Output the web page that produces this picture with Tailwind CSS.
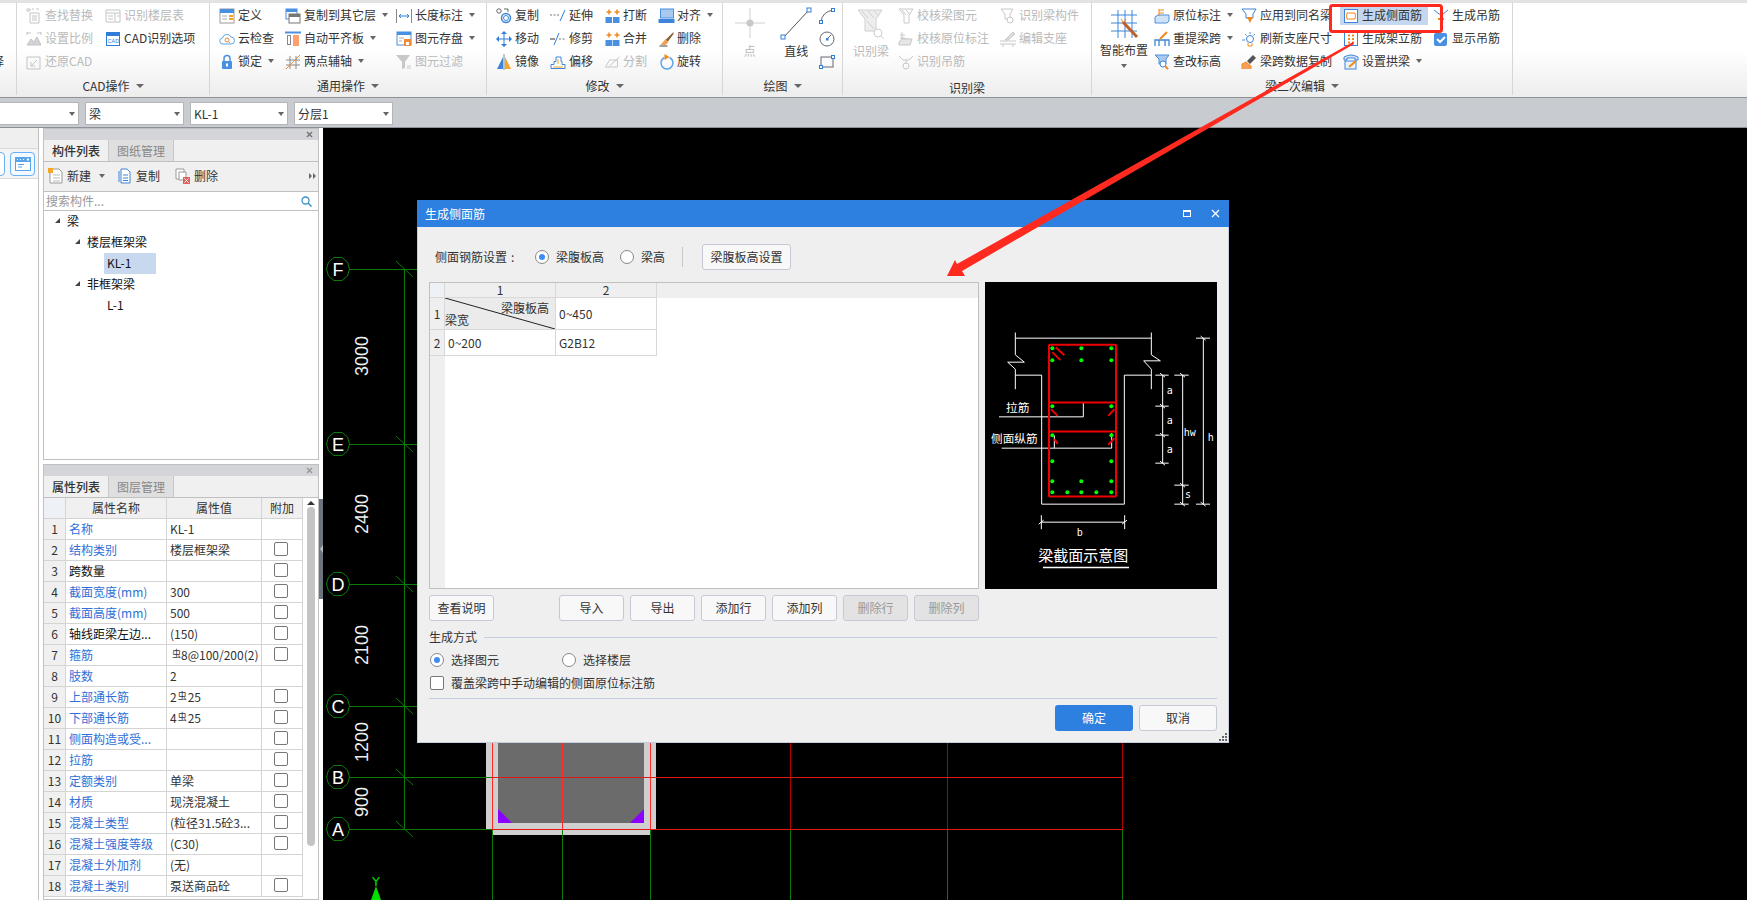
<!DOCTYPE html>
<html lang="zh-CN">
<head>
<meta charset="UTF-8">
<title>生成侧面筋</title>
<script src="https://cdn.jsdelivr.net/npm/@tailwindcss/browser@4"></script>
</head>
<body class="relative w-[1747px] h-[900px] overflow-hidden bg-white text-[12px] leading-[18px] text-[#333] font-['Noto_Sans_CJK_SC',sans-serif]">

<!-- Ribbon -->
<header class="flex h-[98px] border-t-[3px] border-b border-t-[#e2e2e2] border-b-[#8e9296] bg-gradient-to-b from-white from-50% to-[#ededed]">
  <div class="w-[17px] h-[92px] border-r border-[#d6d6d6] overflow-hidden">
    <div class="h-[46px]"></div>
    <div class="h-[23px] flex items-center -ml-[8px] whitespace-nowrap">择</div>
  </div>

  <!-- CAD操作 -->
  <section class="w-[193px] h-[92px] border-r border-[#d6d6d6] flex flex-col [&_svg]:translate-y-[1px]">
    <div class="flex h-[69px] pl-[9px] text-[#b9b9b9]">
      <div class="w-[79px]">
        <div class="h-[23px] flex items-center"><svg class="w-4 h-4 mr-[3px]" viewBox="0 0 16 16" fill="none" stroke="#c4c4c4"><path d="M4 5h9v10H4zM6 8h5M6 10h5M6 12h5M1 1h3v2H1zM6 1h2M10 1h3"/></svg>查找替换</div>
        <div class="h-[23px] flex items-center"><svg class="w-4 h-4 mr-[3px]" viewBox="0 0 16 16" fill="none" stroke="#c4c4c4"><path d="M1 1v3M1 2h4M11 2h4M15 1v3"/><path d="M1 14l4-6 3 3 3-5 4 8z" fill="#d4d4d4"/></svg>设置比例</div>
        <div class="h-[23px] flex items-center"><svg class="w-4 h-4 mr-[3px]" viewBox="0 0 16 16" fill="none" stroke="#c4c4c4"><path d="M1 3h13v12H1zM11 6l-6 6M5 8v4h4"/></svg>还原CAD</div>
      </div>
      <div>
        <div class="h-[23px] flex items-center"><svg class="w-4 h-4 mr-[3px]" viewBox="0 0 16 16" fill="none" stroke="#c4c4c4"><path d="M1 2h14v12H1zM1 5h14M10 5v9M3 8h5M3 11h5M12 8h2"/></svg>识别楼层表</div>
        <div class="h-[23px] flex items-center text-[#333]"><svg class="w-4 h-4 mr-[3px]" viewBox="0 0 16 16"><rect x="1" y="1" width="14" height="4" fill="#2f7fd8"/><rect x="1.500" y="1.500" width="13" height="13" fill="none" stroke="#2f7fd8"/><text x="2.500" y="12" font-size="5.500" fill="#2f7fd8" font-family="Liberation Sans">CAD</text></svg>CAD识别选项</div>
      </div>
    </div>
    <div class="flex-1 flex items-center justify-center pt-[5px]">CAD操作<span class="ml-[6px] border-x-[4px] border-t-[4px] border-x-transparent border-t-[#666]"></span></div>
  </section>

  <!-- 通用操作 -->
  <section class="w-[277px] h-[92px] border-r border-[#d6d6d6] flex flex-col [&_svg]:translate-y-[1px]">
    <div class="flex h-[69px] pl-[9px]">
      <div class="w-[66px]">
        <div class="h-[23px] flex items-center"><svg class="w-4 h-4 mr-[3px]" viewBox="0 0 16 16"><rect x="1" y="1" width="14" height="14" fill="#fff" stroke="#9a9a9a"/><rect x="1" y="1" width="14" height="4" fill="#4a90e2"/><path d="M3 8h5M3 11h5" stroke="#aaa"/><path d="M10 8h4M10 11h4" stroke="#f5a623" stroke-width="2"/></svg>定义</div>
        <div class="h-[23px] flex items-center"><svg class="w-4 h-4 mr-[3px]" viewBox="0 0 16 16"><path d="M4 13a3 3 0 0 1-.5-6A4.500 4.500 0 0 1 12 6a3.500 3.500 0 0 1 0 7z" fill="#fff" stroke="#5aa5ea"/><circle cx="8" cy="9" r="2" fill="none" stroke="#f08a3c"/><path d="M9.500 10.500l1.500 1.500" stroke="#f08a3c"/></svg>云检查</div>
        <div class="h-[23px] flex items-center"><svg class="w-4 h-4 mr-[3px]" viewBox="0 0 16 16"><path d="M5 7V4.500a3 3 0 0 1 6 0V7" fill="none" stroke="#4a90e2" stroke-width="1.500"/><rect x="3" y="7" width="10" height="8" rx="1" fill="#4a90e2"/><rect x="7" y="9.500" width="2" height="3" fill="#fff"/></svg>锁定<span class="ml-[6px] border-x-[3px] border-t-[4px] border-x-transparent border-t-[#666]"></span></div>
      </div>
      <div class="w-[111px]">
        <div class="h-[23px] flex items-center"><svg class="w-4 h-4 mr-[3px]" viewBox="0 0 16 16"><rect x="1" y="1" width="11" height="10" fill="#fff" stroke="#4a90e2"/><rect x="1" y="1" width="11" height="3" fill="#4a90e2"/><rect x="4" y="6" width="11" height="9" fill="#fff" stroke="#777"/><rect x="4" y="6" width="11" height="3" fill="#777"/></svg>复制到其它层<span class="ml-[6px] border-x-[3px] border-t-[4px] border-x-transparent border-t-[#666]"></span></div>
        <div class="h-[23px] flex items-center"><svg class="w-4 h-4 mr-[3px]" viewBox="0 0 16 16"><path d="M0 1.500h16" stroke="#4a90e2" stroke-width="2"/><rect x="2.500" y="4.500" width="3" height="9" fill="#fff" stroke="#888"/><rect x="8" y="4" width="6" height="11" fill="#ff9f70"/></svg>自动平齐板<span class="ml-[6px] border-x-[3px] border-t-[4px] border-x-transparent border-t-[#666]"></span></div>
        <div class="h-[23px] flex items-center"><svg class="w-4 h-4 mr-[3px]" viewBox="0 0 16 16" fill="none"><path d="M5 2v13M11 2v13M1 6h14M1 11h14" stroke="#8a8a8a"/><path d="M1 15L15 1" stroke="#f08a3c"/></svg>两点辅轴<span class="ml-[6px] border-x-[3px] border-t-[4px] border-x-transparent border-t-[#666]"></span></div>
      </div>
      <div>
        <div class="h-[23px] flex items-center"><svg class="w-4 h-4 mr-[3px]" viewBox="0 0 16 16" fill="none"><path d="M.500 1v14M15.500 1v14" stroke="#888"/><path d="M3 8h10M5 6L3 8l2 2M11 6l2 2-2 2" stroke="#2f7fd8"/></svg>长度标注<span class="ml-[6px] border-x-[3px] border-t-[4px] border-x-transparent border-t-[#666]"></span></div>
        <div class="h-[23px] flex items-center"><svg class="w-4 h-4 mr-[3px]" viewBox="0 0 16 16"><rect x="1" y="1" width="14" height="13" fill="#fff" stroke="#4a90e2"/><rect x="1" y="1" width="14" height="3" fill="#4a90e2"/><path d="M3 7h5M3 10h3" stroke="#aaa"/><rect x="8" y="8" width="7" height="7" fill="#f08a3c"/><rect x="10" y="11" width="3" height="3" fill="#fff"/></svg>图元存盘<span class="ml-[6px] border-x-[3px] border-t-[4px] border-x-transparent border-t-[#666]"></span></div>
        <div class="h-[23px] flex items-center text-[#b9b9b9]"><svg class="w-4 h-4 mr-[3px]" viewBox="0 0 16 16"><path d="M0 1h14L9 8v6l-3 1V8z" fill="#c8c8c8"/><path d="M11 12h4M11 14h4" stroke="#ccc"/></svg>图元过滤</div>
      </div>
    </div>
    <div class="flex-1 flex items-center justify-center pt-[5px]">通用操作<span class="ml-[6px] border-x-[4px] border-t-[4px] border-x-transparent border-t-[#666]"></span></div>
  </section>

  <!-- 修改 -->
  <section class="w-[236px] h-[92px] border-r border-[#d6d6d6] flex flex-col [&_svg]:translate-y-[1px]">
    <div class="flex h-[69px] pl-[9px]">
      <div class="w-[54px]">
        <div class="h-[23px] flex items-center"><svg class="w-4 h-4 mr-[3px]" viewBox="0 0 16 16" fill="none"><circle cx="3" cy="3" r="2.200" stroke="#666"/><circle cx="10" cy="10" r="4.500" stroke="#3d85d8" stroke-width="1.500"/><circle cx="10" cy="10" r="2.500" stroke="#3d85d8"/><path d="M8 1h4v3" stroke="#666"/></svg>复制</div>
        <div class="h-[23px] flex items-center"><svg class="w-4 h-4 mr-[3px]" viewBox="0 0 16 16" fill="#2f7fd8"><path d="M8 0l3 3H5zM8 16l-3-3h6zM0 8l3-3v6zM16 8l-3 3V5z"/><path d="M3 7.500h10v1H3zM7.500 3h1v10h-1z"/></svg>移动</div>
        <div class="h-[23px] flex items-center"><svg class="w-4 h-4 mr-[3px]" viewBox="0 0 16 16"><path d="M7 3L1 15h6z" fill="#3d85d8"/><path d="M8 0v16" stroke="#888"/><path d="M9 3l6 12H9z" fill="#f5a623"/></svg>镜像</div>
      </div>
      <div class="w-[54px]">
        <div class="h-[23px] flex items-center"><svg class="w-4 h-4 mr-[3px]" viewBox="0 0 16 16" fill="none"><path d="M0 7h9" stroke="#777" stroke-dasharray="2 1.500"/><path d="M10 13l5-11" stroke="#2f7fd8"/></svg>延伸</div>
        <div class="h-[23px] flex items-center"><svg class="w-4 h-4 mr-[3px]" viewBox="0 0 16 16" fill="none"><path d="M0 8h5" stroke="#333"/><path d="M9 8h7" stroke="#777" stroke-dasharray="2 1.500"/><path d="M4 14L9 2" stroke="#2f7fd8"/></svg>修剪</div>
        <div class="h-[23px] flex items-center"><svg class="w-4 h-4 mr-[3px]" viewBox="0 0 16 16"><path d="M1 14.500h14v-4h-3v-3h-1V3H6v4.500H4v3H1z" fill="#fff" stroke="#3d85d8"/><path d="M3 13h10M8 5v5" stroke="#f5a623"/></svg>偏移</div>
      </div>
      <div class="w-[54px]">
        <div class="h-[23px] flex items-center"><svg class="w-[17px] h-4 mr-[2px]" viewBox="0 0 16 16" fill="none"><path d="M2 4h5M4.500 1.500v5M10 4h5M12.500 1.500v5" stroke="#f08a1c" stroke-width="1.500"/><rect x="1" y="9" width="6.500" height="6" fill="#4a90e2"/><rect x="8.500" y="9" width="6.500" height="6" fill="#4a90e2"/></svg>打断</div>
        <div class="h-[23px] flex items-center"><svg class="w-[17px] h-4 mr-[2px]" viewBox="0 0 16 16" fill="none"><path d="M2 4h5M4.500 1.500v5M10 4h5M12.500 1.500v5" stroke="#f08a1c" stroke-width="1.500"/><rect x="1" y="9" width="14" height="6" fill="#4a90e2"/><path d="M8 9v6" stroke="#bcd6f5"/></svg>合并</div>
        <div class="h-[23px] flex items-center text-[#b9b9b9]"><svg class="w-[17px] h-4 mr-[2px]" viewBox="0 0 16 16" fill="none" stroke="#c8c8c8"><path d="M1 13h12M1 13l4-7h8M13 6v7M4 13L15 3"/></svg>分割</div>
      </div>
      <div>
        <div class="h-[23px] flex items-center"><svg class="w-[17px] h-4 mr-[2px]" viewBox="0 0 16 16"><rect x="2" y="1" width="13" height="9" fill="#a8c8ee" stroke="#4a90e2"/><rect x="0" y="11" width="16" height="4" fill="#3d85d8"/></svg>对齐<span class="ml-[6px] border-x-[3px] border-t-[4px] border-x-transparent border-t-[#666]"></span></div>
        <div class="h-[23px] flex items-center"><svg class="w-[17px] h-4 mr-[2px]" viewBox="0 0 16 16"><path d="M1 15h8" stroke="#444"/><path d="M15 1L7 9l2 2 6-8z" fill="#8a5a2b"/><path d="M7 8l3 3-3 3H2z" fill="#f0a050"/></svg>删除</div>
        <div class="h-[23px] flex items-center"><svg class="w-[17px] h-4 mr-[2px]" viewBox="0 0 16 16" fill="none"><path d="M6 3.500a6 6 0 1 0 5 0" stroke="#5aa5ea" stroke-width="1.500"/><path d="M6 0l5 3-5 3z" fill="#f08a1c"/></svg>旋转</div>
      </div>
    </div>
    <div class="flex-1 flex items-center justify-center pt-[5px]">修改<span class="ml-[6px] border-x-[4px] border-t-[4px] border-x-transparent border-t-[#666]"></span></div>
  </section>

  <!-- 绘图 -->
  <section class="w-[120px] h-[92px] border-r border-[#d6d6d6] flex flex-col [&_svg]:translate-y-[1px]">
    <div class="flex h-[69px]">
      <div class="w-[54px] flex flex-col items-center text-[#b9b9b9]">
        <svg class="w-[36px] h-[36px] mt-[1px]" viewBox="0 0 36 36" fill="none"><path d="M3 18h30M18 3v30" stroke="#d0d0d0"/><circle cx="18" cy="18" r="3.500" fill="#c8c8c8"/></svg>
        <span class="mt-[2px]">点</span>
      </div>
      <div class="w-[40px] flex flex-col items-center">
        <svg class="w-[32px] h-[36px] mt-[1px]" viewBox="0 0 32 36" fill="none"><path d="M3 33L29 5" stroke="#555"/><rect x="1" y="30" width="4" height="4" fill="#fff" stroke="#2f7fd8"/><rect x="27" y="3" width="4" height="4" fill="#fff" stroke="#2f7fd8"/></svg>
        <span class="mt-[2px]">直线</span>
      </div>
      <div class="w-[26px] pl-[3px]">
        <div class="h-[23px] flex items-center"><svg class="w-4 h-4" viewBox="0 0 16 16" fill="none"><path d="M2 14Q3 4 14 2" stroke="#666"/><rect x="0.500" y="12.500" width="3" height="3" fill="#fff" stroke="#2f7fd8"/><rect x="12.500" y="0.500" width="3" height="3" fill="#fff" stroke="#2f7fd8"/></svg></div>
        <div class="h-[23px] flex items-center"><svg class="w-4 h-4" viewBox="0 0 16 16" fill="none"><circle cx="8" cy="8" r="7" stroke="#667"/><path d="M8 8l4-4" stroke="#667"/><rect x="7" y="7" width="2.500" height="2.500" fill="#2f7fd8"/></svg></div>
        <div class="h-[23px] flex items-center"><svg class="w-4 h-4" viewBox="0 0 16 16" fill="none"><rect x="2" y="3" width="12" height="10" stroke="#667"/><rect x="0.500" y="11.500" width="3" height="3" fill="#fff" stroke="#2f7fd8"/><rect x="12.500" y="1.500" width="3" height="3" fill="#fff" stroke="#2f7fd8"/></svg></div>
      </div>
    </div>
    <div class="flex-1 flex items-center justify-center pt-[5px]">绘图<span class="ml-[6px] border-x-[4px] border-t-[4px] border-x-transparent border-t-[#666]"></span></div>
  </section>

  <!-- 识别梁 -->
  <section class="w-[249px] h-[92px] border-r border-[#d6d6d6] flex flex-col [&_svg]:translate-y-[1px]">
    <div class="flex h-[69px] pl-[9px] text-[#b9b9b9]">
      <div class="w-[46px] flex flex-col items-center pr-[8px]">
        <svg class="w-[28px] h-[36px] mt-[1px]" viewBox="0 0 28 36" fill="none" stroke="#cfcfcf"><path d="M1 5h24L19 14v12H8V14z" fill="#eee"/><path d="M5 6l6 7M11 6l6 7M17 6l5 5M10 16l7 8"/><circle cx="21" cy="28" r="4" fill="#fff"/><path d="M24 31l3 3"/></svg>
        <span class="mt-[2px] whitespace-nowrap">识别梁</span>
      </div>
      <div class="w-[102px]">
        <div class="h-[23px] flex items-center"><svg class="w-4 h-4 mr-[3px]" viewBox="0 0 16 16" fill="none" stroke="#c8c8c8"><path d="M1 1h14l-4 6v8H6V7zM4 2l4 5M8 2l4 5"/></svg>校核梁图元</div>
        <div class="h-[23px] flex items-center"><svg class="w-4 h-4 mr-[3px]" viewBox="0 0 16 16" fill="none" stroke="#c8c8c8"><path d="M4 1v7h7M2 4h5M2 7h5"/><path d="M1 11l3-3h10l-2 6H1z" fill="#e6e6e6"/></svg>校核原位标注</div>
        <div class="h-[23px] flex items-center"><svg class="w-4 h-4 mr-[3px]" viewBox="0 0 16 16" fill="none" stroke="#c8c8c8"><path d="M1 2l4 4h6l4-4M8 6v4"/><circle cx="8" cy="12" r="3"/></svg>识别吊筋</div>
      </div>
      <div>
        <div class="h-[23px] flex items-center"><svg class="w-4 h-4 mr-[3px]" viewBox="0 0 16 16" fill="none" stroke="#c8c8c8"><path d="M1 1h12l-3 5v5H5V6z"/><circle cx="10" cy="12" r="3" fill="#fff"/></svg>识别梁构件</div>
        <div class="h-[23px] flex items-center"><svg class="w-4 h-4 mr-[3px]" viewBox="0 0 16 16" fill="none" stroke="#c8c8c8"><path d="M0 10h16M0 13h16M3 13v3M13 13v3"/><path d="M5 9l8-8 2 2-7 6z" fill="#ddd"/></svg>编辑支座</div>
      </div>
    </div>
    <div class="flex-1 flex items-center justify-center pt-[7px]">识别梁</div>
  </section>

  <!-- 梁二次编辑 -->
  <section class="w-[421px] h-[92px] border-r border-[#d6d6d6] flex flex-col [&_svg]:translate-y-[1px]">
    <div class="flex h-[69px] pl-[8px]">
      <div class="w-[54px] flex flex-col items-center pr-[6px]">
        <svg class="w-[30px] h-[32px] mt-[5px]" viewBox="0 0 30 32" fill="none"><path d="M2 6h26M2 14h26M2 22h26M9 1v28M16 1v28M23 1v28" stroke="#3d85d8"/><path d="M14 13l14 15" stroke="#c0602a" stroke-width="3"/><path d="M12 10l2 3M17 10l-2 3" stroke="#f08a1c"/></svg>
        <span class="whitespace-nowrap mt-[1px]">智能布置</span>
        <span class="mt-[5px] border-x-[3px] border-t-[4px] border-x-transparent border-t-[#666]"></span>
      </div>
      <div class="w-[87px]">
        <div class="h-[23px] flex items-center"><svg class="w-4 h-4 mr-[3px]" viewBox="0 0 16 16"><path d="M1 15V9l3-2h11v6l-2 2z" fill="#cfe2f7" stroke="#4a90e2"/><path d="M5 1v7M5 2h5M5 5h5" stroke="#f08a1c"/></svg>原位标注<span class="ml-[6px] border-x-[3px] border-t-[4px] border-x-transparent border-t-[#666]"></span></div>
        <div class="h-[23px] flex items-center"><svg class="w-4 h-4 mr-[3px]" viewBox="0 0 16 16" fill="none"><path d="M1 15V9h14v6M5 15V9M11 15V9" stroke="#3d85d8" stroke-width="1.300"/><path d="M6 8l7-7" stroke="#f08a1c" stroke-width="2"/></svg>重提梁跨<span class="ml-[6px] border-x-[3px] border-t-[4px] border-x-transparent border-t-[#666]"></span></div>
        <div class="h-[23px] flex items-center"><svg class="w-4 h-4 mr-[3px]" viewBox="0 0 16 16"><path d="M1 1h14l-3 4v5H5V5z" fill="#a8c8ee" stroke="#4a90e2"/><circle cx="9" cy="10" r="3" fill="#fff" stroke="#3d85d8"/><path d="M11 12l3 3" stroke="#f08a1c" stroke-width="2"/></svg>查改标高</div>
      </div>
      <div class="w-[102px]">
        <div class="h-[23px] flex items-center"><svg class="w-4 h-4 mr-[3px]" viewBox="0 0 16 16"><path d="M1 1h14l-3 5v4H5V6z" fill="#fff" stroke="#3d85d8"/><path d="M6 9h6l-3 6z" fill="#f08a1c"/></svg>应用到同名梁</div>
        <div class="h-[23px] flex items-center"><svg class="w-4 h-4 mr-[3px]" viewBox="0 0 16 16" fill="none"><circle cx="9" cy="8" r="3.500" stroke="#3d85d8"/><path d="M9 1v2M4 3l1.500 1.500M14 3l-1.500 1.500M1 9h3" stroke="#4a90e2"/><path d="M7 12v3h4v-3" stroke="#f08a1c"/></svg>刷新支座尺寸</div>
        <div class="h-[23px] flex items-center"><svg class="w-4 h-4 mr-[3px]" viewBox="0 0 16 16"><path d="M1 15v-5l4-2 5 4v3" fill="#f5a05a" stroke="#f08a1c"/><path d="M12 1l3 3-6 6-3-3z" fill="#555"/></svg>梁跨数据复制</div>
      </div>
      <div class="w-[90px]">
        <div class="relative isolate h-[23px] flex items-center"><span class="absolute -z-10 -left-[3px] top-[4px] w-[88px] h-[18px] bg-[#c5d7ee]"></span><svg class="w-4 h-4 mr-[3px]" viewBox="0 0 16 16" fill="none"><rect x="1.500" y="1.500" width="13" height="13" fill="#fff" stroke="#3d85d8"/><path d="M4 5h8M4 11h8M4 5Q3 8 4 11M12 5q1 3 0 6" stroke="#f08a1c"/></svg>生成侧面筋</div>
        <div class="h-[23px] flex items-center"><svg class="w-4 h-4 mr-[3px]" viewBox="0 0 16 16" fill="none"><rect x="1.500" y="1.500" width="13" height="13" fill="#fff" stroke="#3d85d8"/><path d="M5 4.500h2M9 4.500h2M5 8h2M9 8h2M5 11.500h2M9 11.500h2" stroke="#f08a1c" stroke-width="2"/></svg>生成架立筋</div>
        <div class="h-[23px] flex items-center"><svg class="w-4 h-4 mr-[3px]" viewBox="0 0 16 16"><path d="M1 3q7-4 14 0v3h-3V4H4v2H1z" fill="#cfe2f7" stroke="#3d85d8"/><rect x="2" y="7" width="11" height="8" fill="#eaf2fb" stroke="#3d85d8"/><path d="M6 13l7-6" stroke="#f08a1c" stroke-width="2"/></svg>设置拱梁<span class="ml-[6px] border-x-[3px] border-t-[4px] border-x-transparent border-t-[#666]"></span></div>
      </div>
      <div>
        <div class="h-[23px] flex items-center"><svg class="w-4 h-4 mr-[3px]" viewBox="0 0 16 16" fill="none"><path d="M1 2l5 4h4l5-4" stroke="#3d85d8"/><path d="M8 6v4M5 11h6" stroke="#f08a1c" stroke-width="2"/></svg>生成吊筋</div>
        <div class="h-[23px] flex items-center"><svg class="w-4 h-4 mr-[3px]" viewBox="0 0 16 16" fill="none"><rect x="1" y="2" width="13" height="13" rx="2" fill="#4a90e2"/><path d="M4 8l3 3 5-5" stroke="#fff" stroke-width="2"/></svg>显示吊筋</div>
      </div>
    </div>
    <div class="flex-1 flex items-center justify-center pt-[5px]">梁二次编辑<span class="ml-[6px] border-x-[4px] border-t-[4px] border-x-transparent border-t-[#666]"></span></div>
  </section>
</header>

<!-- Combo toolbar -->
<div class="flex h-[30px] pt-[4px] gap-[6px] bg-[#c8cbcf] border-b border-[#8e9296]">
  <div class="w-[79px] h-[23px] bg-white border border-[#b5b5b5] border-l-0 flex items-center justify-end pr-[3px]"><span class="border-x-[3px] border-t-[4px] border-x-transparent border-t-[#666]"></span></div>
  <div class="w-[99px] h-[23px] bg-white border border-[#b5b5b5] flex items-center justify-between pl-[3px] pr-[3px]">梁<span class="border-x-[3px] border-t-[4px] border-x-transparent border-t-[#666]"></span></div>
  <div class="w-[98px] h-[23px] bg-white border border-[#b5b5b5] flex items-center justify-between pl-[3px] pr-[3px]">KL-1<span class="border-x-[3px] border-t-[4px] border-x-transparent border-t-[#666]"></span></div>
  <div class="w-[99px] h-[23px] bg-white border border-[#b5b5b5] flex items-center justify-between pl-[3px] pr-[3px]">分层1<span class="border-x-[3px] border-t-[4px] border-x-transparent border-t-[#666]"></span></div>
</div>

<main class="flex h-[772px] overflow-hidden">
  <!-- Left strip -->
  <div class="w-[39px] shrink-0 border-r border-[#c0c0c0] flex flex-col">
    <div class="h-[21px] bg-[#efefef] border-b border-[#d8d8d8]"></div>
    <div class="h-[30px] bg-[#f5f5f5] border-b border-[#d8d8d8] flex items-center">
      <div class="w-[6px] h-[24px] -ml-[1px] border border-[#6ab0f5] rounded-r-[4px] bg-white"></div>
      <div class="ml-[5px] w-[25px] h-[24px] border border-[#6ab0f5] rounded-[4px] bg-[#f4f9ff] flex items-center justify-center">
        <svg class="w-[16px] h-[14px]" viewBox="0 0 16 14"><rect width="16" height="14" fill="#5aa5ea"/><rect x="1" y="5" width="14" height="8" fill="#fff"/><path d="M2 2.500h1M5 2.500h1M8 2.500h1M12 2h2l-1 1.500z" stroke="#fff" fill="#fff"/><path d="M3 7.500h6M3 10h4" stroke="#5aa5ea"/></svg>
      </div>
    </div>
    <div class="flex-1 bg-white"></div>
  </div>

  <!-- Panels -->
  <div class="w-[280px] shrink-0 pl-[4px] flex flex-col gap-[4px]">
    <section class="h-[332px] shrink-0 border border-[#c0c0c0] flex flex-col bg-white">
      <div class="h-[11px] bg-[#d3d5d8] flex items-center justify-end pr-[5px]"><svg class="w-[7px] h-[7px]" viewBox="0 0 7 7"><path d="M1 1l5 5M6 1L1 6" stroke="#777" stroke-width="1.500"/></svg></div>
      <div class="h-[22px] flex bg-[#f0f0f0] border-b border-[#c0c0c0]">
        <div class="w-[65px] border-r border-[#c8c8c8] flex items-center justify-center font-medium">构件列表</div>
        <div class="w-[65px] bg-[#dfdfdf] border-r border-[#c8c8c8] flex items-center justify-center text-[#888]">图纸管理</div>
      </div>
      <div class="h-[30px] flex items-center bg-[#f0f0f0] border-b border-[#c0c0c0] pl-[4px] pr-[2px] pb-[2px]">
        <svg class="w-[15px] h-[16px] mr-[4px]" viewBox="0 0 15 16"><path d="M2 1h9l3 3v11H2z" fill="#fff" stroke="#999"/><path d="M5 7h7M5 10h7M5 13h7" stroke="#bbb"/><rect x="0" y="0" width="5" height="5" fill="#f5a623"/></svg>
        <span>新建</span><span class="ml-[8px] border-x-[3px] border-t-[4px] border-x-transparent border-t-[#666]"></span>
        <svg class="w-[13px] h-[16px] ml-[13px] mr-[5px]" viewBox="0 0 13 16"><path d="M3 1h6l3 3v11H3z" fill="#fff" stroke="#3d85d8"/><path d="M1 3v11M5 7h5M5 10h5M5 12.500h5" stroke="#3d85d8"/></svg>
        <span>复制</span>
        <svg class="w-[15px] h-[16px] ml-[15px] mr-[4px]" viewBox="0 0 15 16"><path d="M1 1h8v10H1z" fill="#fff" stroke="#999"/><path d="M4 4h7v8H4z" fill="#fff" stroke="#999"/><rect x="8" y="9" width="7" height="7" fill="#e06060"/><path d="M9.500 10.500l4 4M13.500 10.500l-4 4" stroke="#fff"/></svg>
        <span>删除</span>
        <svg class="ml-auto w-[7px] h-[6px]" viewBox="0 0 7 6" fill="#666"><path d="M0 0l3 3-3 3zM4 0l3 3-3 3z"/></svg>
      </div>
      <div class="h-[19px] flex items-center justify-between border-b border-[#c0c0c0] pl-[2px] pr-[6px] text-[#999]">搜索构件...<svg class="w-[11px] h-[11px]" viewBox="0 0 11 11" fill="none"><circle cx="4.500" cy="4.500" r="3.500" stroke="#3d8fc8" stroke-width="1.300"/><path d="M7 7l3.500 3.500" stroke="#3d8fc8" stroke-width="1.500"/></svg></div>
      <div class="flex-1 text-[#111]">
        <div class="h-[21px] flex items-center pl-[10px] pb-[2px]"><svg class="w-[7px] h-[7px] mr-[6px]" viewBox="0 0 7 7"><path d="M6 1v5H1z" fill="#444"/></svg>梁</div>
        <div class="h-[21px] flex items-center pl-[30px] pb-[2px]"><svg class="w-[7px] h-[7px] mr-[6px]" viewBox="0 0 7 7"><path d="M6 1v5H1z" fill="#444"/></svg>楼层框架梁</div>
        <div class="h-[21px] ml-[60px] w-[52px] flex items-center pl-[3px] pb-[2px] bg-[#c7d8ef]">KL-1</div>
        <div class="h-[21px] flex items-center pl-[30px] pb-[2px]"><svg class="w-[7px] h-[7px] mr-[6px]" viewBox="0 0 7 7"><path d="M6 1v5H1z" fill="#444"/></svg>非框架梁</div>
        <div class="h-[21px] flex items-center pl-[63px] pb-[2px]">L-1</div>
      </div>
    </section>

    <section class="relative flex-1 border border-[#c0c0c0] bg-white flex flex-col overflow-hidden">
      <div class="h-[11px] shrink-0 bg-[#d3d5d8] flex items-center justify-end pr-[5px]"><svg class="w-[7px] h-[7px]" viewBox="0 0 7 7"><path d="M1 1l5 5M6 1L1 6" stroke="#999" stroke-width="1.500"/></svg></div>
      <div class="h-[22px] shrink-0 flex bg-[#f0f0f0] border-b border-[#c0c0c0]">
        <div class="w-[65px] border-r border-[#c8c8c8] flex items-center justify-center font-medium">属性列表</div>
        <div class="w-[65px] bg-[#dfdfdf] border-r border-[#c8c8c8] flex items-center justify-center text-[#888]">图层管理</div>
      </div>
      <div class="flex">
        <div class="w-[259px] shrink-0 grid grid-cols-[22px_101px_95px_41px] auto-rows-[21px]">
          <div class="bg-[#eef2f7] border-r border-b border-[#d4d4d4]"></div><div class="bg-[#f0f0f0] border-r border-b border-[#d4d4d4] flex items-center justify-center">属性名称</div><div class="bg-[#f0f0f0] border-r border-b border-[#d4d4d4] flex items-center justify-center">属性值</div><div class="bg-[#f0f0f0] border-r border-b border-[#d4d4d4] flex items-center justify-center">附加</div>

          <div class="bg-[#f0f0f0] border-r border-b border-[#d4d4d4] flex items-center justify-center">1</div><div class="border-r border-b border-[#d4d4d4] flex items-center pl-[3px] text-[#2f6fd6]">名称</div><div class="border-r border-b border-[#d4d4d4] flex items-center pl-[3px]">KL-1</div><div class="border-r border-b border-[#d4d4d4]"></div>
          <div class="bg-[#f0f0f0] border-r border-b border-[#d4d4d4] flex items-center justify-center">2</div><div class="border-r border-b border-[#d4d4d4] flex items-center pl-[3px] text-[#2f6fd6]">结构类别</div><div class="border-r border-b border-[#d4d4d4] flex items-center pl-[3px]">楼层框架梁</div><div class="border-r border-b border-[#d4d4d4] flex items-center justify-center"><span class="w-[14px] h-[14px] -ml-[2px] -mt-[2px] border border-[#777] rounded-[2px]"></span></div>
          <div class="bg-[#f0f0f0] border-r border-b border-[#d4d4d4] flex items-center justify-center">3</div><div class="border-r border-b border-[#d4d4d4] flex items-center pl-[3px] text-[#111]">跨数量</div><div class="border-r border-b border-[#d4d4d4]"></div><div class="border-r border-b border-[#d4d4d4] flex items-center justify-center"><span class="w-[14px] h-[14px] -ml-[2px] -mt-[2px] border border-[#777] rounded-[2px]"></span></div>
          <div class="bg-[#f0f0f0] border-r border-b border-[#d4d4d4] flex items-center justify-center">4</div><div class="border-r border-b border-[#d4d4d4] flex items-center pl-[3px] text-[#2f6fd6]">截面宽度(mm)</div><div class="border-r border-b border-[#d4d4d4] flex items-center pl-[3px]">300</div><div class="border-r border-b border-[#d4d4d4] flex items-center justify-center"><span class="w-[14px] h-[14px] -ml-[2px] -mt-[2px] border border-[#777] rounded-[2px]"></span></div>
          <div class="bg-[#f0f0f0] border-r border-b border-[#d4d4d4] flex items-center justify-center">5</div><div class="border-r border-b border-[#d4d4d4] flex items-center pl-[3px] text-[#2f6fd6]">截面高度(mm)</div><div class="border-r border-b border-[#d4d4d4] flex items-center pl-[3px]">500</div><div class="border-r border-b border-[#d4d4d4] flex items-center justify-center"><span class="w-[14px] h-[14px] -ml-[2px] -mt-[2px] border border-[#777] rounded-[2px]"></span></div>
          <div class="bg-[#f0f0f0] border-r border-b border-[#d4d4d4] flex items-center justify-center">6</div><div class="border-r border-b border-[#d4d4d4] flex items-center pl-[3px] text-[#111]">轴线距梁左边...</div><div class="border-r border-b border-[#d4d4d4] flex items-center pl-[3px]">(150)</div><div class="border-r border-b border-[#d4d4d4] flex items-center justify-center"><span class="w-[14px] h-[14px] -ml-[2px] -mt-[2px] border border-[#777] rounded-[2px]"></span></div>
          <div class="bg-[#f0f0f0] border-r border-b border-[#d4d4d4] flex items-center justify-center">7</div><div class="border-r border-b border-[#d4d4d4] flex items-center pl-[3px] text-[#2f6fd6]">箍筋</div><div class="border-r border-b border-[#d4d4d4] flex items-center pl-[5px] overflow-hidden whitespace-nowrap"><span class="text-[9px] -mt-[3px]">虫</span>8@100/200(2)</div><div class="border-r border-b border-[#d4d4d4] flex items-center justify-center"><span class="w-[14px] h-[14px] -ml-[2px] -mt-[2px] border border-[#777] rounded-[2px]"></span></div>
          <div class="bg-[#f0f0f0] border-r border-b border-[#d4d4d4] flex items-center justify-center">8</div><div class="border-r border-b border-[#d4d4d4] flex items-center pl-[3px] text-[#2f6fd6]">肢数</div><div class="border-r border-b border-[#d4d4d4] flex items-center pl-[3px]">2</div><div class="border-r border-b border-[#d4d4d4]"></div>
          <div class="bg-[#f0f0f0] border-r border-b border-[#d4d4d4] flex items-center justify-center">9</div><div class="border-r border-b border-[#d4d4d4] flex items-center pl-[3px] text-[#2f6fd6]">上部通长筋</div><div class="border-r border-b border-[#d4d4d4] flex items-center pl-[3px] whitespace-nowrap">2<span class="text-[9px] -mt-[3px] mx-[1px]">虫</span>25</div><div class="border-r border-b border-[#d4d4d4] flex items-center justify-center"><span class="w-[14px] h-[14px] -ml-[2px] -mt-[2px] border border-[#777] rounded-[2px]"></span></div>
          <div class="bg-[#f0f0f0] border-r border-b border-[#d4d4d4] flex items-center justify-center">10</div><div class="border-r border-b border-[#d4d4d4] flex items-center pl-[3px] text-[#2f6fd6]">下部通长筋</div><div class="border-r border-b border-[#d4d4d4] flex items-center pl-[3px] whitespace-nowrap">4<span class="text-[9px] -mt-[3px] mx-[1px]">虫</span>25</div><div class="border-r border-b border-[#d4d4d4] flex items-center justify-center"><span class="w-[14px] h-[14px] -ml-[2px] -mt-[2px] border border-[#777] rounded-[2px]"></span></div>
          <div class="bg-[#f0f0f0] border-r border-b border-[#d4d4d4] flex items-center justify-center">11</div><div class="border-r border-b border-[#d4d4d4] flex items-center pl-[3px] text-[#2f6fd6]">侧面构造或受...</div><div class="border-r border-b border-[#d4d4d4]"></div><div class="border-r border-b border-[#d4d4d4] flex items-center justify-center"><span class="w-[14px] h-[14px] -ml-[2px] -mt-[2px] border border-[#777] rounded-[2px]"></span></div>
          <div class="bg-[#f0f0f0] border-r border-b border-[#d4d4d4] flex items-center justify-center">12</div><div class="border-r border-b border-[#d4d4d4] flex items-center pl-[3px] text-[#2f6fd6]">拉筋</div><div class="border-r border-b border-[#d4d4d4]"></div><div class="border-r border-b border-[#d4d4d4] flex items-center justify-center"><span class="w-[14px] h-[14px] -ml-[2px] -mt-[2px] border border-[#777] rounded-[2px]"></span></div>
          <div class="bg-[#f0f0f0] border-r border-b border-[#d4d4d4] flex items-center justify-center">13</div><div class="border-r border-b border-[#d4d4d4] flex items-center pl-[3px] text-[#2f6fd6]">定额类别</div><div class="border-r border-b border-[#d4d4d4] flex items-center pl-[3px]">单梁</div><div class="border-r border-b border-[#d4d4d4] flex items-center justify-center"><span class="w-[14px] h-[14px] -ml-[2px] -mt-[2px] border border-[#777] rounded-[2px]"></span></div>
          <div class="bg-[#f0f0f0] border-r border-b border-[#d4d4d4] flex items-center justify-center">14</div><div class="border-r border-b border-[#d4d4d4] flex items-center pl-[3px] text-[#2f6fd6]">材质</div><div class="border-r border-b border-[#d4d4d4] flex items-center pl-[3px]">现浇混凝土</div><div class="border-r border-b border-[#d4d4d4] flex items-center justify-center"><span class="w-[14px] h-[14px] -ml-[2px] -mt-[2px] border border-[#777] rounded-[2px]"></span></div>
          <div class="bg-[#f0f0f0] border-r border-b border-[#d4d4d4] flex items-center justify-center">15</div><div class="border-r border-b border-[#d4d4d4] flex items-center pl-[3px] text-[#2f6fd6]">混凝土类型</div><div class="border-r border-b border-[#d4d4d4] flex items-center pl-[3px] whitespace-nowrap">(粒径31.5砼3...</div><div class="border-r border-b border-[#d4d4d4] flex items-center justify-center"><span class="w-[14px] h-[14px] -ml-[2px] -mt-[2px] border border-[#777] rounded-[2px]"></span></div>
          <div class="bg-[#f0f0f0] border-r border-b border-[#d4d4d4] flex items-center justify-center">16</div><div class="border-r border-b border-[#d4d4d4] flex items-center pl-[3px] text-[#2f6fd6]">混凝土强度等级</div><div class="border-r border-b border-[#d4d4d4] flex items-center pl-[3px]">(C30)</div><div class="border-r border-b border-[#d4d4d4] flex items-center justify-center"><span class="w-[14px] h-[14px] -ml-[2px] -mt-[2px] border border-[#777] rounded-[2px]"></span></div>
          <div class="bg-[#f0f0f0] border-r border-b border-[#d4d4d4] flex items-center justify-center">17</div><div class="border-r border-b border-[#d4d4d4] flex items-center pl-[3px] text-[#2f6fd6]">混凝土外加剂</div><div class="border-r border-b border-[#d4d4d4] flex items-center pl-[3px]">(无)</div><div class="border-r border-b border-[#d4d4d4]"></div>
          <div class="bg-[#f0f0f0] border-r border-b border-[#d4d4d4] flex items-center justify-center">18</div><div class="border-r border-b border-[#d4d4d4] flex items-center pl-[3px] text-[#2f6fd6]">混凝土类别</div><div class="border-r border-b border-[#d4d4d4] flex items-center pl-[3px]">泵送商品砼</div><div class="border-r border-b border-[#d4d4d4] flex items-center justify-center"><span class="w-[14px] h-[14px] -ml-[2px] -mt-[2px] border border-[#777] rounded-[2px]"></span></div>
        </div>
        <!-- Scrollbar -->
        <div class="flex-1 flex flex-col items-center pt-[3px]">
          <span class="border-x-[4px] border-b-[4px] border-x-transparent border-b-[#333]"></span>
          <div class="mt-[2px] w-[8px] h-[339px] rounded-[4px] bg-[#c4c4c4]"></div>
        </div>
      </div>
    </section>
  </div>

  <!-- Splitter -->
  <div class="w-[4px] shrink-0 bg-white pt-[371px]">
    <div class="h-[100px] bg-[#6c757d] flex items-center justify-center"><span class="border-y-[4px] border-r-[3px] border-y-transparent border-r-[#b8bdc2]"></span></div>
  </div>

  <!-- Drawing canvas -->
  <div class="relative flex-1 bg-black">
    <svg class="absolute inset-0" width="1424" height="772" viewBox="323 128 1424 772" shape-rendering="crispEdges" fill="none">
      <defs><polygon id="bubble" points="-11.500,0 -9.500,-7 -4,-11.500 4,-11.500 9.500,-7 11.500,0 9.500,7 4,11.500 -4,11.500 -9.500,7" stroke="#0a7a0a" fill="none"/></defs>
      <rect x="486" y="730" width="170" height="99.500" fill="#cfcfcf"/>
      <rect x="492" y="829" width="158" height="6" fill="#cfcfcf"/>
      <rect x="498" y="730" width="146" height="93" fill="#6b6b6b"/>
      <g shape-rendering="auto">
        <path d="M498 809v14h14z" fill="#8b00ff"/>
        <path d="M644 809v14h-14z" fill="#8b00ff"/>
      </g>
      <g stroke="#0a7a0a">
        <path d="M349 269.500h68M349 444.500h68M349 584.500h68M349 706.500h68M349 777.500h143M349 829.500h143"/>
        <path d="M404.500 269v560"/>
        <path d="M492.500 829v71M562.500 829v71M650.500 829v71M790.500 829v71M947.500 829v71M1122.500 829v71"/>
      </g>
      <g stroke="#0a7a0a" shape-rendering="auto">
        <path d="M396 261l17 16M396 436l17 16M396 576l17 16M396 698l17 16M396 769l17 16M396 821l17 16"/>
        <use href="#bubble" x="338" y="269"/><use href="#bubble" x="338" y="444"/><use href="#bubble" x="338" y="584"/><use href="#bubble" x="338" y="706"/><use href="#bubble" x="338" y="777"/><use href="#bubble" x="338" y="829"/>
      </g>
      <g stroke="#ff2a2a"><path d="M492.500 743v87M562.500 743v87M650.500 743v87"/></g>
      <g stroke="#b00000"><path d="M790.500 743v87M947.500 743v87M1122.500 743v87"/></g>
      <path d="M492 777.500h631M492 829.500h631" stroke="#e01818"/>
      <g shape-rendering="auto" fill="#fff" font-size="18" font-family="Liberation Sans" text-anchor="middle">
        <text x="338" y="276">F</text><text x="338" y="451">E</text><text x="338" y="591">D</text><text x="338" y="713">C</text><text x="338" y="784">B</text><text x="338" y="836">A</text>
      </g>
      <g shape-rendering="auto" fill="#eee" font-size="18" font-family="Liberation Sans" text-anchor="middle">
        <text transform="translate(368 356) rotate(-90)">3000</text>
        <text transform="translate(368 514) rotate(-90)">2400</text>
        <text transform="translate(368 645) rotate(-90)">2100</text>
        <text transform="translate(368 742) rotate(-90)">1200</text>
        <text transform="translate(368 802) rotate(-90)">900</text>
      </g>
      <g shape-rendering="auto">
        <text x="376" y="886" fill="#00e000" font-size="13" font-family="DejaVu Sans" text-anchor="middle">Y</text>
        <path d="M376 886l-5 14h10z" fill="#00e000"/>
      </g>
    </svg>

    <!-- Dialog -->
    <div class="absolute left-[94px] top-[72px] w-[812px] h-[543px] bg-[#efefef] border border-[#c5cde0] flex flex-col">
      <div class="h-[27px] shrink-0 -mx-[1px] -mt-[1px] bg-[#2d7fe0] text-white flex items-center pl-[8px] pr-[9px]">
        <span>生成侧面筋</span>
        <svg class="ml-auto w-[8px] h-[7px] mr-[20px]" viewBox="0 0 8 7" fill="none"><rect x=".5" y=".5" width="7" height="6" stroke="#fff"/><path d="M0 1h8" stroke="#fff" stroke-width="2"/></svg>
        <svg class="w-[9px] h-[9px]" viewBox="0 0 9 9"><path d="M1 1l7 7M8 1L1 8" stroke="#fff" stroke-width="1.300"/></svg>
      </div>
      <div class="flex-1 flex flex-col px-[11px]">
        <div class="flex items-center h-[26px] mt-[17px] pl-[6px]">
          <span class="w-[100px]">侧面钢筋设置<span class="ml-[4px]">:</span></span>
          <span class="w-[14px] h-[14px] rounded-full border border-[#888] bg-white flex items-center justify-center"><span class="w-[6px] h-[6px] rounded-full bg-[#3b8df0]"></span></span>
          <span class="ml-[7px] w-[64px]">梁腹板高</span>
          <span class="w-[14px] h-[14px] rounded-full border border-[#888] bg-white"></span>
          <span class="ml-[7px]">梁高</span>
          <span class="ml-[17px] w-px h-[20px] bg-[#c8c8c8]"></span>
          <button class="ml-[19px] w-[89px] h-[26px] bg-[#f8f8f8] border border-[#c5c9d4] rounded-[3px]">梁腹板高设置</button>
        </div>
        <div class="flex gap-[6px] mt-[12px] h-[307px]">
          <div class="w-[550px] border border-[#c0c0c0] bg-white grid grid-cols-[15px_111px_101px_1fr] grid-rows-[15px_32px_26px_1fr]">
            <div class="bg-[#eef2f7] border-r border-b border-[#d8d8d8]"></div>
            <div class="bg-[#efefef] border-r border-b border-[#d8d8d8] flex items-center justify-center">1</div>
            <div class="bg-[#efefef] border-r border-b border-[#d8d8d8] flex items-center justify-center">2</div>
            <div class="bg-[#efefef]"></div>

            <div class="bg-[#efefef] border-r border-b border-[#d8d8d8] flex items-center justify-center">1</div>
            <div class="relative bg-[#ebebeb] border-r border-b border-[#d8d8d8]">
              <svg class="absolute inset-0" width="110" height="31" viewBox="0 0 110 31"><path d="M0 0L110 31" stroke="#222"/></svg>
              <span class="absolute right-[6px] top-[1px]">梁腹板高</span>
              <span class="absolute left-0 bottom-0">梁宽</span>
            </div>
            <div class="border-r border-b border-[#d8d8d8] flex items-center pl-[3px]">0~450</div>
            <div></div>

            <div class="bg-[#efefef] border-r border-b border-[#d8d8d8] flex items-center justify-center">2</div>
            <div class="border-r border-b border-[#d8d8d8] flex items-center pl-[3px]">0~200</div>
            <div class="border-r border-b border-[#d8d8d8] flex items-center pl-[3px]">G2B12</div>
            <div></div>

            <div class="bg-[#efefef]"></div>
            <div class="col-span-3"></div>
          </div>
          <!-- Beam section diagram -->
          <svg class="w-[232px] h-[307px] bg-black" viewBox="30 37 696 920" fill="none">
            <g stroke="#fff" stroke-width="3">
              <path d="M121 205H529M121 188V255L148 277H98L121 298V358M529 188V255L556 273H506L529 298V358"/>
              <path d="M121 316H200V703H448V316H529"/>
              <path d="M72 441H325V398M80 535H410V490M238 535V497"/>
              <path d="M563 316V580M541 316H581M541 409H581M541 496H581M541 580H581"/>
              <path d="M623 316V703M598 316H641M598 646H641M598 703H641"/>
              <path d="M685 205V703M663 205H705M663 703H705"/>
              <path d="M199 757H449M199 736V778M449 736V778"/>
              <path d="M555 310l15 12M555 403l15 12M555 490l15 12M555 574l15 12M615 310l15 12M615 640l15 12M615 697l15 12M677 199l15 12M677 697l15 12M191 763l15-12M441 763l15-12"/>
            </g>
            <g stroke="#f00000" stroke-width="6">
              <rect x="222" y="225" width="201" height="455" rx="2"/>
              <path d="M222 398H423M222 485H423M242 232l26 24M232 247l24 24M228 418l20 20M418 418l-18 20M238 508l10 14M418 505l-18 20"/>
            </g>
            <g fill="#00ff00">
              <circle cx="232" cy="235" r="6"/><circle cx="319" cy="235" r="6"/><circle cx="409" cy="235" r="6"/>
              <circle cx="232" cy="271" r="6"/><circle cx="319" cy="271" r="6"/><circle cx="409" cy="271" r="6"/>
              <circle cx="232" cy="409" r="6"/><circle cx="409" cy="409" r="6"/>
              <circle cx="232" cy="496" r="6"/><circle cx="409" cy="496" r="6"/>
              <circle cx="232" cy="574" r="6"/><circle cx="409" cy="574" r="6"/>
              <circle cx="232" cy="634" r="6"/><circle cx="319" cy="634" r="6"/><circle cx="409" cy="634" r="6"/>
              <circle cx="232" cy="667" r="6"/><circle cx="277" cy="667" r="6"/><circle cx="319" cy="667" r="6"/><circle cx="364" cy="667" r="6"/><circle cx="409" cy="667" r="6"/>
            </g>
            <g fill="#fff" font-family="Noto Sans CJK SC">
              <text x="93" y="426" font-size="35">拉筋</text>
              <text x="48" y="520" font-size="35">侧面纵筋</text>
              <text x="190" y="875" font-size="45">梁截面示意图</text>
            </g>
            <g fill="#fff" font-family="DejaVu Sans Mono" font-size="30">
              <text x="575" y="372">a</text><text x="575" y="464">a</text><text x="575" y="551">a</text>
              <text x="626" y="500">hw</text><text x="630" y="685">s</text><text x="698" y="515">h</text><text x="305" y="798">b</text>
            </g>
            <path d="M204 893H462" stroke="#fff" stroke-width="5"/>
          </svg>
        </div>
        <div class="flex gap-[6px] mt-[6px]">
          <button class="w-[65px] h-[26px] bg-[#f8f8f8] border border-[#c5c9d4] rounded-[3px] mr-[59px]">查看说明</button>
          <button class="w-[65px] h-[26px] bg-[#f8f8f8] border border-[#c5c9d4] rounded-[3px]">导入</button>
          <button class="w-[65px] h-[26px] bg-[#f8f8f8] border border-[#c5c9d4] rounded-[3px]">导出</button>
          <button class="w-[65px] h-[26px] bg-[#f8f8f8] border border-[#c5c9d4] rounded-[3px]">添加行</button>
          <button class="w-[65px] h-[26px] bg-[#f8f8f8] border border-[#c5c9d4] rounded-[3px]">添加列</button>
          <button class="w-[65px] h-[26px] bg-[#e3e3e3] border border-[#c5c9d4] rounded-[3px] text-[#999]">删除行</button>
          <button class="w-[65px] h-[26px] bg-[#e3e3e3] border border-[#c5c9d4] rounded-[3px] text-[#999]">删除列</button>
        </div>
        <div class="flex items-center h-[18px] mt-[7px]">
          <span>生成方式</span><span class="ml-[7px] flex-1 h-px bg-[#c5cde0]"></span>
        </div>
        <div class="flex items-center h-[18px] mt-[5px]">
          <span class="ml-[1px] w-[14px] h-[14px] rounded-full border border-[#888] bg-white flex items-center justify-center"><span class="w-[6px] h-[6px] rounded-full bg-[#3b8df0]"></span></span>
          <span class="ml-[7px] w-[111px]">选择图元</span>
          <span class="w-[14px] h-[14px] rounded-full border border-[#888] bg-white"></span>
          <span class="ml-[7px]">选择楼层</span>
        </div>
        <div class="flex items-center h-[18px] mt-[5px]">
          <span class="ml-[1px] w-[14px] h-[14px] rounded-[2px] border border-[#777] bg-white"></span>
          <span class="ml-[7px]">覆盖梁跨中手动编辑的侧面原位标注筋</span>
        </div>
        <div class="h-px bg-[#c5cde0] mt-[6px]"></div>
        <div class="flex justify-end gap-[6px] mt-[6px]">
          <button class="w-[78px] h-[26px] bg-[#2d7fe0] rounded-[3px] text-white">确定</button>
          <button class="w-[78px] h-[26px] bg-[#f8f8f8] border border-[#c5c9d4] rounded-[3px]">取消</button>
        </div>
      </div>
      <svg class="absolute right-[1px] bottom-[1px] w-[8px] h-[8px]" viewBox="0 0 8 8" fill="#666"><rect x="6" y="0" width="2" height="2"/><rect x="3" y="3" width="2" height="2"/><rect x="6" y="3" width="2" height="2"/><rect x="0" y="6" width="2" height="2"/><rect x="3" y="6" width="2" height="2"/><rect x="6" y="6" width="2" height="2"/></svg>
    </div>
  </div>
</main>

<!-- Annotation drawn over the screenshot: red box and arrow -->
<svg class="absolute inset-0 pointer-events-none" width="1747" height="900" viewBox="0 0 1747 900" fill="none">
  <rect x="1330.500" y="5.500" width="111" height="26" rx="2" stroke="#ff2a1f" stroke-width="3"/>
  <polygon points="1353,42 957,264 955,260 947,276 965,276 962,271 1354,44" fill="#ff2a1f"/>
</svg>
</body>
</html>
